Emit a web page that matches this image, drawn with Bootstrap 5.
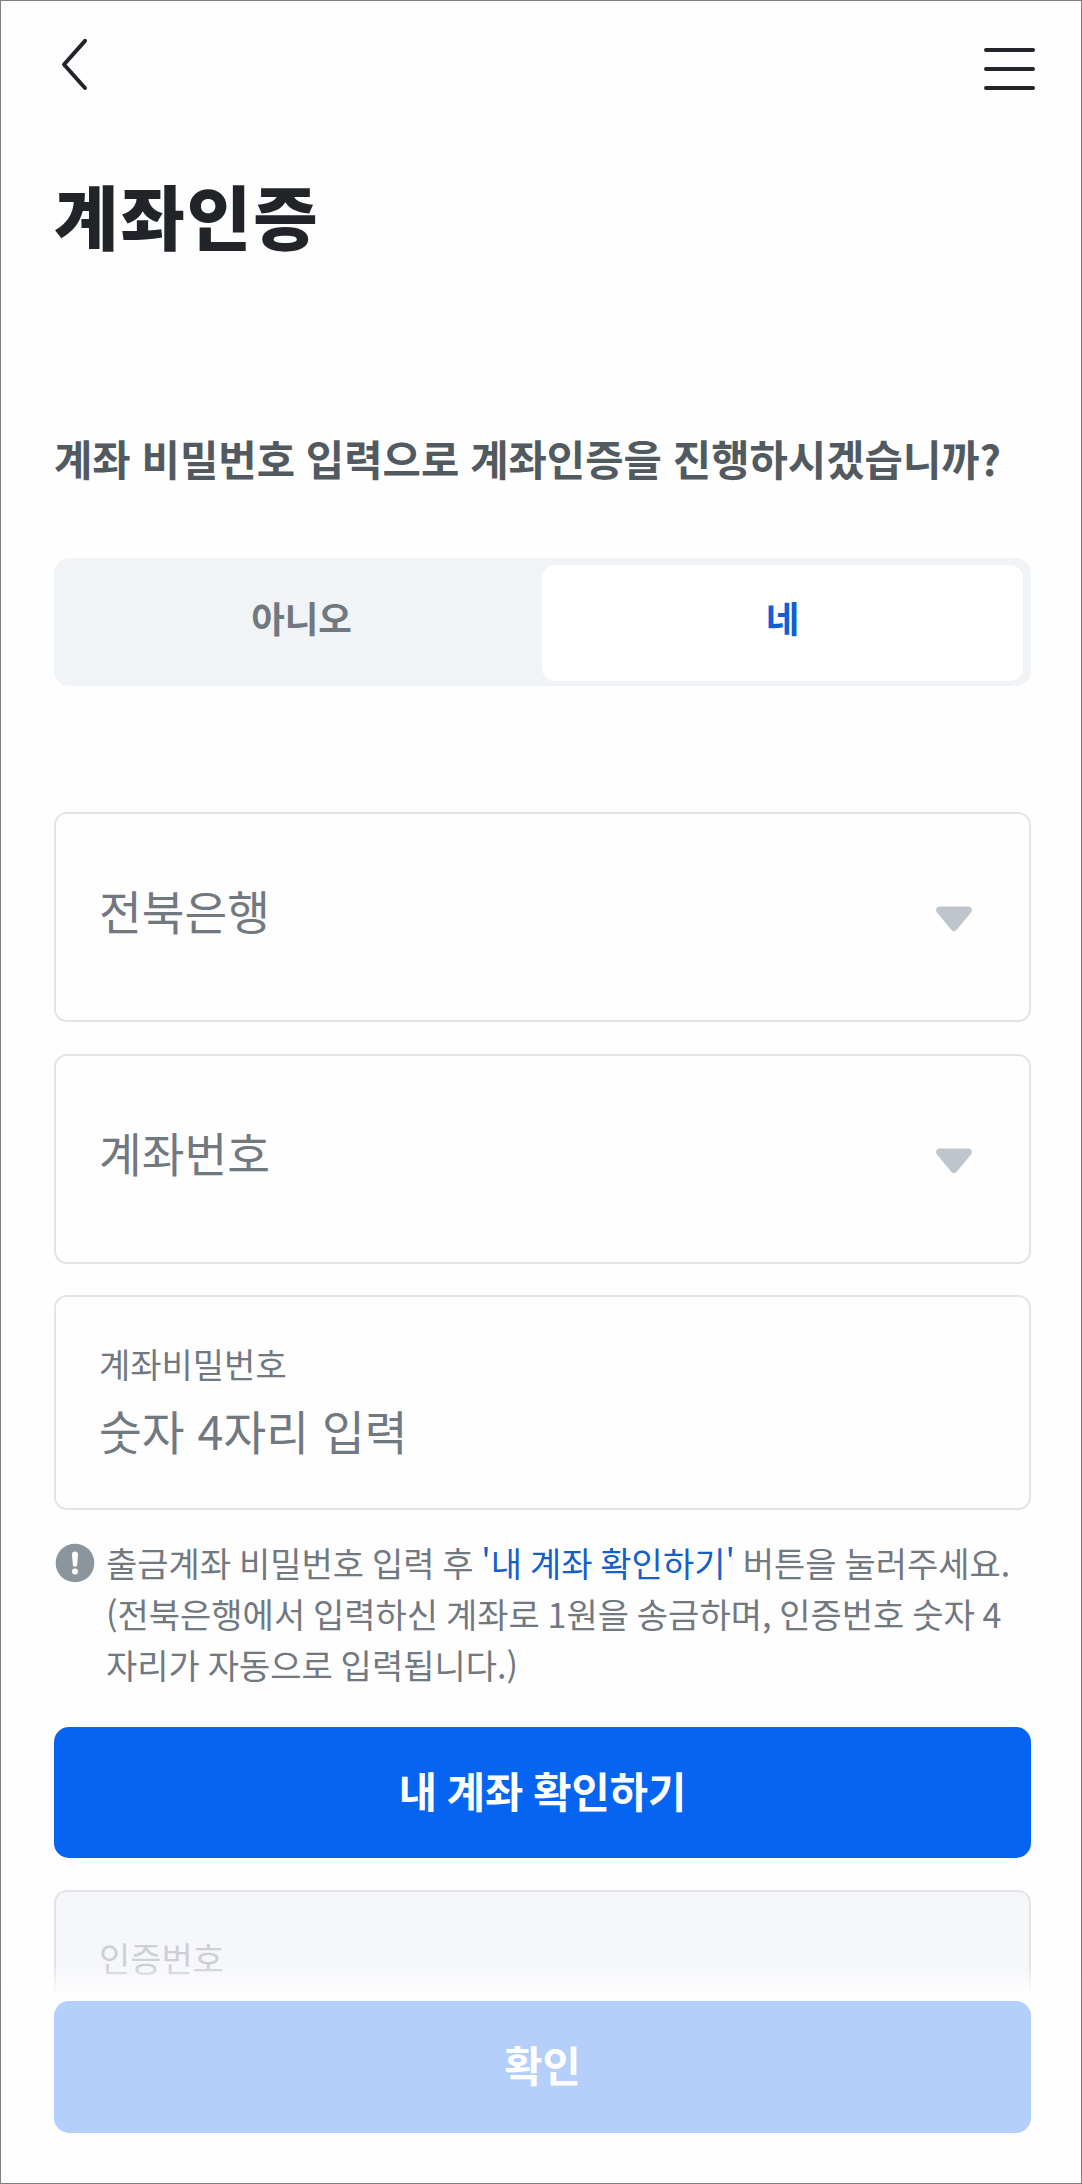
<!DOCTYPE html>
<html lang="ko">
<head>
<meta charset="utf-8">
<meta name="viewport" content="width=device-width, initial-scale=1">
<title>계좌인증</title>
<link href="https://cdn.jsdelivr.net/npm/bootstrap@5.3.0/dist/css/bootstrap.min.css" rel="stylesheet">
<style>
  body { font-family: "Noto Sans CJK KR", "Noto Sans", sans-serif; color: #717880; background: #fff; }
  .screen { height: 2184px; border: 1px solid #808080; padding: 0 50px 0 53px; background: #fefefe; }
  .topbar { height: 164px; padding: 33px 0 0 3px; }
  .topbar svg { display: block; }
  .icon-btn { background: none; border: 0; padding: 0; }
  .menu-btn { margin-right: -6px; }
  .page-title { font-size: 70px; font-weight: 900; line-height: 100px; letter-spacing: 2px; color: #212429; margin: 0; }
  .question { font-size: 41.7px; font-weight: 700; line-height: 60px; word-spacing: -.8px; color: #525a61; margin: 163px 0 0; white-space: nowrap; }
  .segment { height: 128px; margin-top: 70px; padding: 7px 8px 5px 7px; border-radius: 15px; background: #f0f4f7; }
  .segment button { border: 0; background: none; border-radius: 13px; font-size: 36.5px; font-weight: 700; color: #717880; padding: 0 0 9px; }
  .segment button.chosen { background: #fff; color: #0f5fd6; }
  .field { border: 2px solid #e2e4e5; border-radius: 13px; background: #fefefe; padding: 0 57px 0 43px; width: 100%; }
  .field-select { height: 210px; color: #717880; font-size: 46.5px; line-height: 60px; padding-bottom: 14px; }
  .field-select svg { margin-top: 18px; }
  .select-first { margin-top: 126px; }
  .field-entry { height: 215px; margin-top: 31px; padding-top: 42px; }
  .field-label { font-size: 34px; line-height: 50px; }
  .field-value { font-size: 46.5px; line-height: 60px; margin-top: 11px; }
  .field-off { height: 215px; background: #f5f7fb; padding-top: 41px; color: #cdd0d4; }
  .stack-gap { margin-top: 32px; }
  .notice { margin: 27px 0 0; font-size: 34px; line-height: 51px; word-spacing: -1.7px; white-space: nowrap; }
  .notice svg { margin: 6px 11px 0 1px; }
  .notice em { font-style: normal; color: #155fc8; }
  .cta { border: 0; border-radius: 15px; font-size: 41.6px; font-weight: 700; word-spacing: -1.8px; color: #fff; padding: 0 0 5px; }
  .cta-main { height: 131px; margin-top: 37px; background: #0565f2; }
  .dock { bottom: 1px; left: 1px; right: 1px; height: 228px; padding: 46px 50px 50px 53px; background: linear-gradient(rgba(254,254,254,0) 10px, #fefefe 40px); }
  .cta-off { height: 132px; background: #b4d0fa; }
</style>
<script src="https://cdn.jsdelivr.net/npm/bootstrap@5.3.0/dist/js/bootstrap.bundle.min.js"></script>
</head>
<body>
<div class="screen position-relative overflow-hidden">
  <header class="topbar d-flex justify-content-between align-items-start">
    <button class="icon-btn" aria-label="뒤로">
      <svg width="40" height="60" viewBox="0 0 40 60" fill="none" stroke="#212429" stroke-width="4" stroke-linecap="round" stroke-linejoin="round"><path d="M28 6.800 7 30.500 28 54"/></svg>
    </button>
    <button class="icon-btn menu-btn" aria-label="메뉴">
      <svg width="56" height="60" viewBox="0 0 56 60" fill="none" stroke="#212429" stroke-width="4" stroke-linecap="round"><path d="M5 16h47M5 35h47M5 54h47"/></svg>
    </button>
  </header>

  <main>
    <h1 class="page-title">계좌인증</h1>
    <h2 class="question">계좌 비밀번호 입력으로 계좌인증을 진행하시겠습니까?</h2>

    <div class="segment d-flex" role="group">
      <button class="flex-fill w-50" type="button">아니오</button>
      <button class="flex-fill w-50 chosen" type="button">네</button>
    </div>

    <button type="button" class="field field-select select-first d-flex align-items-center justify-content-between">
      <span>전북은행</span>
      <svg width="36" height="26" viewBox="0 0 36 26"><path fill="#bfc5cc" d="M4 .5h28c3.500 0 5 3.500 3 6L21 23.500q-3 3.500-6 0L1 6.500c-2-2.500-.5-6 3-6z"/></svg>
    </button>
    <button type="button" class="field field-select stack-gap d-flex align-items-center justify-content-between">
      <span>계좌번호</span>
      <svg width="36" height="26" viewBox="0 0 36 26"><path fill="#bfc5cc" d="M4 .5h28c3.500 0 5 3.500 3 6L21 23.500q-3 3.500-6 0L1 6.500c-2-2.500-.5-6 3-6z"/></svg>
    </button>
    <div class="field field-entry">
      <div class="field-label">계좌비밀번호</div>
      <div class="field-value">숫자 4자리 입력</div>
    </div>

    <div class="notice d-flex align-items-start">
      <svg class="flex-shrink-0" width="40" height="40" viewBox="0 0 40 40"><circle cx="20" cy="20" r="19.300" fill="#8b959e"/><path fill="#fefefe" d="M17 11.500a3 3 0 0 1 6 0l-.8 10a2.200 2.200 0 0 1-4.400 0z"/><circle cx="20" cy="28.500" r="3" fill="#fefefe"/></svg>
      <div>출금계좌 비밀번호 입력 후 <em>'내 계좌 확인하기'</em> 버튼을 눌러주세요.<br>(전북은행에서 입력하신 계좌로 1원을 송금하며, 인증번호 숫자 4<br>자리가 자동으로 입력됩니다.)</div>
    </div>

    <button type="button" class="cta cta-main w-100 d-block">내 계좌 확인하기</button>
    <div class="field field-off stack-gap">
      <div class="field-label">인증번호</div>
    </div>
  </main>

  <footer class="dock position-fixed">
    <button type="button" class="cta cta-off w-100 d-block">확인</button>
  </footer>
</div>
</body>
</html>
